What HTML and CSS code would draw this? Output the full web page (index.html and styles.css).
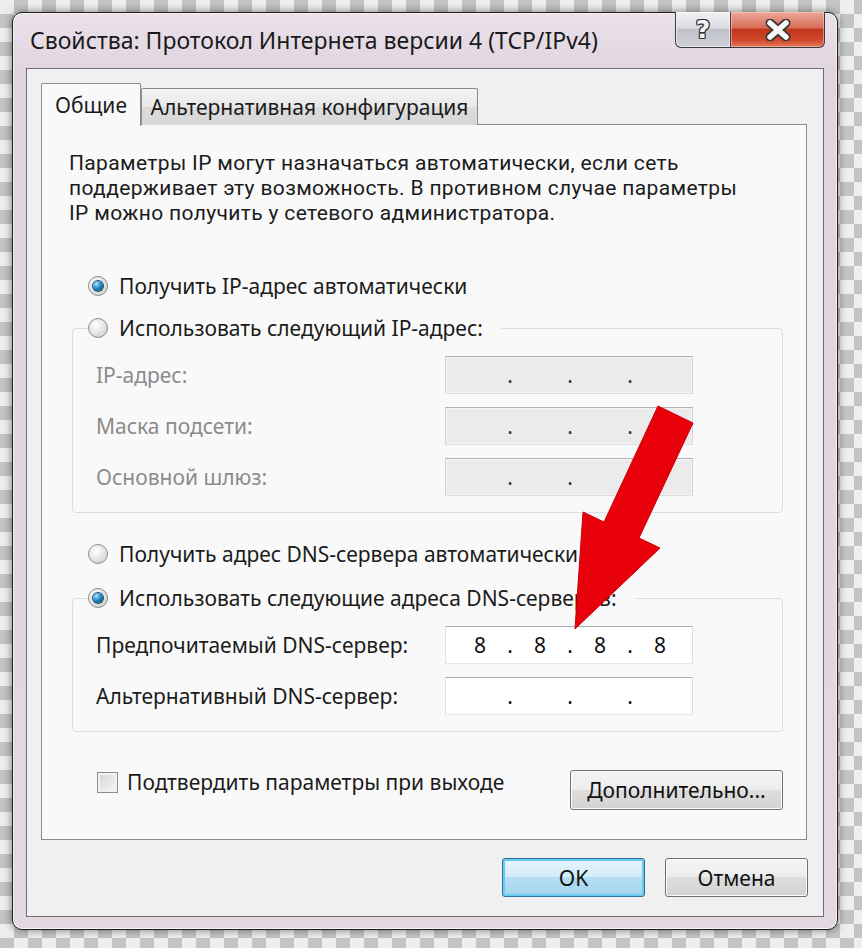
FILE: index.html
```html
<!DOCTYPE html>
<html lang="ru">
<head>
    <meta charset="UTF-8">
    <title>Свойства: Протокол Интернета версии 4 (TCP/IPv4)</title>
    <link rel="stylesheet" href="styles.css">
</head>
<body>

    <div class="window">
        <!-- Title bar -->
        <div class="titlebar">
            <span class="title">Свойства: Протокол Интернета версии 4 (TCP/IPv4)</span>
            <div class="caption">
                <div class="cap cap-help"><span>?</span></div>
                <div class="cap cap-close">
                    <svg width="28" height="22" viewBox="0 0 28 22">
                        <path d="M6 4 L22 18 M22 4 L6 18" stroke="#3a3a3a" stroke-width="9" stroke-linecap="round"/>
                        <path d="M6 4 L22 18 M22 4 L6 18" stroke="#fafafa" stroke-width="5.5" stroke-linecap="round"/>
                    </svg>
                </div>
            </div>
        </div>

        <div class="client">
            <div class="tabs">
                <div class="tab active">Общие</div>
                <div class="tab">Альтернативная конфигурация</div>
            </div>

            <div class="panel">
                <div class="intro">
                    <div>Параметры IP могут назначаться автоматически, если сеть</div>
                    <div>поддерживает эту возможность. В противном случае параметры</div>
                    <div>IP можно получить у сетевого администратора.</div>
                </div>

                <div class="option first"><span class="radio on"></span>Получить IP-адрес автоматически</div>

                <fieldset class="group">
                    <legend><div class="option"><span class="radio"></span>Использовать следующий IP-адрес:</div></legend>
                    <div class="field disabled">
                        <span class="label">IP-адрес:</span>
                        <div class="ip"><span></span><span>.</span><span></span><span>.</span><span></span><span>.</span><span></span></div>
                    </div>
                    <div class="field disabled">
                        <span class="label">Маска подсети:</span>
                        <div class="ip"><span></span><span>.</span><span></span><span>.</span><span></span><span>.</span><span></span></div>
                    </div>
                    <div class="field disabled">
                        <span class="label">Основной шлюз:</span>
                        <div class="ip"><span></span><span>.</span><span></span><span>.</span><span></span><span>.</span><span></span></div>
                    </div>
                </fieldset>

                <div class="option dns-auto"><span class="radio"></span>Получить адрес DNS-сервера автоматически</div>

                <fieldset class="group dns">
                    <legend><div class="option"><span class="radio on"></span>Использовать следующие адреса DNS-серверов:</div></legend>
                    <div class="field">
                        <span class="label">Предпочитаемый DNS-сервер:</span>
                        <div class="ip"><span>8</span><span>.</span><span>8</span><span>.</span><span>8</span><span>.</span><span>8</span></div>
                    </div>
                    <div class="field">
                        <span class="label">Альтернативный DNS-сервер:</span>
                        <div class="ip"><span></span><span>.</span><span></span><span>.</span><span></span><span>.</span><span></span></div>
                    </div>
                </fieldset>

                <div class="bottom-row">
                    <div class="check"><span class="checkbox"></span>Подтвердить параметры при выходе</div>
                    <button class="button advanced"><u>Д</u>ополнительно...</button>
                </div>
            </div>

            <div class="actions">
                <button class="button default">OK</button>
                <button class="button">Отмена</button>
            </div>
        </div>
    </div>

    <!-- red pointer drawn over the dialog -->
    <svg class="arrow" width="862" height="948" viewBox="0 0 862 948">
        <polygon points="658,406 693,423 639,538 660,548 575,629 583,512 604,522" fill="#e8000b" stroke="#c80008" stroke-width="1"/>
    </svg>

</body>
</html>
```

FILE: styles.css
```css
html, body {
    margin: 0;
    padding: 0;
}
body {
    position: relative;
    width: 862px;
    height: 948px;
    overflow: hidden;
    box-sizing: border-box;
    padding: 12px;
    font-family: "Noto Sans", "Open Sans", sans-serif;
    color: #1b1b1b;
    background: repeating-conic-gradient(#c4c4c4 0 25%, #eeeeee 0 50%) 0 0 / 28px 28px;
}

/* window frame */
.window {
    width: 826px;
    height: 918px;
    box-sizing: border-box;
    display: flex;
    flex-direction: column;
    padding: 0 13px 12px 13px;
    border: 1px solid #1e1e1e;
    border-radius: 10px;
    background: linear-gradient(#ebe1ea, #e0d5df 60px, #e3d8e2);
    box-shadow: 0 0 9px rgba(0, 0, 0, 0.5), inset 0 0 0 1px #f8f2f7;
}
.titlebar {
    height: 55px;
    display: flex;
    align-items: flex-start;
}
.title {
    flex: 1;
    padding-left: 4px;
    font-size: 23px;
    line-height: 55px;
    color: #1a1a1a;
    white-space: nowrap;
}
.caption {
    display: flex;
    margin: -1px -1px 0 0;
}
.cap {
    height: 36px;
    box-sizing: border-box;
    display: flex;
    align-items: center;
    justify-content: center;
    border: 1px solid #3a3a40;
    border-top: none;
}
.cap-help {
    width: 56px;
    border-radius: 0 0 0 6px;
    background: linear-gradient(#f0f0f4 0, #dcdce3 45%, #c2c2cb 50%, #cfcfd7 100%);
    box-shadow: inset 0 0 0 1px rgba(255, 255, 255, 0.6);
}
.cap-help span {
    font-family: "DejaVu Sans", sans-serif;
    font-weight: bold;
    font-size: 25px;
    color: #f4f4f4;
    text-shadow: 1px 0 0 #333, -1px 0 0 #333, 0 1px 0 #333, 0 -1px 0 #333,
                 1px 1px 0 #333, -1px -1px 0 #333, 1px -1px 0 #333, -1px 1px 0 #333;
}
.cap-close {
    width: 94px;
    border-left: none;
    border-radius: 0 0 6px 0;
    background: linear-gradient(#eaa99b 0, #d86d57 45%, #c3361c 50%, #cf4729 80%, #e27a5b 100%);
    box-shadow: inset 0 0 0 1px rgba(255, 220, 210, 0.5);
}

/* client area */
.client {
    flex: 1;
    display: flex;
    flex-direction: column;
    padding: 14px 16px 0 14px;
    border: 1px solid #6f6f6f;
    background: #f0f0f0;
}
.tabs {
    display: flex;
    align-items: flex-end;
    height: 42px;
    margin-bottom: -1px;
    position: relative;
    z-index: 1;
}
.tab {
    box-sizing: border-box;
    width: 337px;
    height: 37px;
    line-height: 37px;
    text-align: center;
    font-size: 21px;
    border: 1px solid #898c95;
    border-bottom: none;
    border-radius: 2px 2px 0 0;
    background: linear-gradient(#f4f4f4, #e8e8e8 50%, #dcdcdc 50%, #d8d8d8);
}
.tab.active {
    width: 100px;
    height: 43px;
    line-height: 42px;
    margin-bottom: -1px;
    background: #f9f9f9;
}
.panel {
    height: 716px;
    box-sizing: border-box;
    padding: 26px 23px 0 27px;
    border: 1px solid #898c95;
    background: #f9f9f9;
}

/* Roboto keeps the 25px line pitch without the glyph boxes touching */
.intro {
    font-family: Roboto, "Noto Sans", sans-serif;
    font-size: 21px;
    letter-spacing: 0.35px;
    line-height: 25px;
    white-space: nowrap;
}

/* radios and groups */
.option {
    display: flex;
    align-items: center;
    gap: 11px;
    height: 26px;
    font-size: 21px;
    white-space: nowrap;
}
.option.first {
    margin: 47px 0 0 19px;
}
.option.dns-auto {
    margin: 28px 0 0 19px;
}
.radio {
    flex: none;
    width: 20px;
    height: 20px;
    box-sizing: border-box;
    border-radius: 50%;
    border: 1px solid #8c8c8c;
    background: radial-gradient(circle at 40% 35%, #ffffff, #e2e2e2 55%, #c4c4c4);
    display: flex;
    align-items: center;
    justify-content: center;
}
.radio.on::after {
    content: "";
    width: 10px;
    height: 10px;
    border-radius: 50%;
    background: radial-gradient(circle at 35% 30%, #a6e6ff, #1f80bd 50%, #0b3b5c);
    box-shadow: 0 0 0 1px #1d4a6b;
}
.group {
    margin: 16px 0 0 3px;
    padding: 0 0 16px 0;
    border: 1px solid #d5dfe5;
    border-radius: 4px;
}
.group.dns {
    margin-top: 18px;
}
.group legend {
    margin-left: 15px;
    padding: 0 18px 0 0;
}

/* ip rows */
.field {
    display: flex;
    align-items: center;
    height: 38px;
    margin: 13px 0 0 23px;
    font-size: 21px;
}
.field:first-of-type {
    margin-top: 15px;
}
.label {
    width: 349px;
    white-space: nowrap;
}
.field.disabled .label {
    color: #8b8b8b;
}
.ip {
    width: 248px;
    height: 38px;
    box-sizing: border-box;
    display: grid;
    grid-template-columns: 50px 10px 50px 10px 50px 10px 50px;
    align-items: center;
    padding-left: 9px;
    text-align: center;
    border: 1px solid;
    border-color: #abadb3 #dbdfe6 #e3e9ef #e2e3ea;
    background: #ffffff;
    color: #111;
}
.field.disabled .ip {
    background: #ebebeb;
    border-color: #b3b3b3 #d2d2d2 #dcdcdc #d2d2d2;
    box-shadow: inset 0 0 0 1px #f4f4f4;
    color: #333;
}

/* bottom */
.bottom-row {
    display: flex;
    justify-content: space-between;
    align-items: flex-start;
    margin-top: 37px;
}
.check {
    display: flex;
    align-items: center;
    gap: 9px;
    height: 26px;
    margin-left: 28px;
    font-size: 21px;
    white-space: nowrap;
}
.checkbox {
    width: 21px;
    height: 21px;
    box-sizing: border-box;
    border: 1px solid #8e8f8f;
    background: linear-gradient(135deg, #d4d4d4, #f7f7f7);
    box-shadow: inset 0 0 0 2px #f2f2f2;
}
.button {
    box-sizing: border-box;
    width: 143px;
    height: 39px;
    padding: 0;
    font-family: inherit;
    font-size: 21px;
    color: #111;
    border: 1px solid #707070;
    border-radius: 3px;
    background: linear-gradient(#f4f4f4 0, #ececec 50%, #dedede 50%, #d3d3d3 100%);
    box-shadow: inset 0 0 0 1px #fcfcfc;
}
.button u {
    text-decoration-thickness: 1px;
}
.advanced {
    width: 213px;
    height: 40px;
    margin: 1px 0 0 0;
}
.actions {
    display: flex;
    justify-content: flex-end;
    gap: 20px;
    margin: 18px -1px 0 0;
}
.button.default {
    border-color: #2c6f99;
    background: linear-gradient(#e6f5fc 0, #d2ecf9 50%, #b5def4 50%, #a3d4ee 100%);
    box-shadow: inset 0 0 0 2px #67cdf0;
}

/* overlay */
.arrow {
    position: absolute;
    left: 0;
    top: 0;
    pointer-events: none;
}
```
